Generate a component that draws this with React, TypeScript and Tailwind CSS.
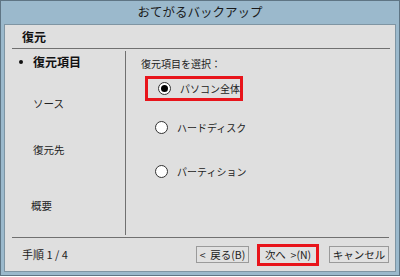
import { useState } from 'react';

const jp = { fontFamily: '"Noto Sans CJK JP", "Noto Sans", sans-serif' };

interface Option {
  id: string;
  label: string;
}

const options: Option[] = [
  { id: 'pc', label: 'パソコン全体' },
  { id: 'disk', label: 'ハードディスク' },
  { id: 'part', label: 'パーティション' },
];

function Radio({ checked }: { checked: boolean }) {
  return (
    <span className="flex h-[13px] w-[13px] shrink-0 items-center justify-center rounded-full border border-[#333] bg-white">
      {checked && <span className="h-[7px] w-[7px] rounded-full bg-black" />}
    </span>
  );
}

export default function App() {
  const [selected, setSelected] = useState('pc');

  return (
    <div className="h-[277px] w-[400px] bg-white text-[10px] text-[#222]" style={jp}>
      <div className="flex h-[276px] w-[400px] flex-col border border-[#5f7584] bg-[#9bb9cc] px-[3px] pb-[3px]">
        {/* title bar */}
        <div className="flex h-[23px] shrink-0 items-center justify-center text-[12.5px] text-[#1a1a1a]">
          おてがるバックアップ
        </div>

        {/* client area */}
        <div className="flex flex-1 flex-col border border-[#7f95a3] bg-[#dfdfdf]">
          <div className="flex h-[23px] shrink-0 items-center pl-[17px] text-[12px] font-bold text-[#111]">
            復元
          </div>
          <div className="ml-[7px] mr-[5px] h-px bg-[#707070]" />

          <div className="flex flex-1">
            {/* steps */}
            <div className="my-[2px] ml-[7px] w-[114px] shrink-0 border-r border-[#707070]">
              <div className="flex items-center pl-[7px] pt-[2px] text-[12px] font-bold text-[#111]">
                <span className="mr-[10px] h-[4px] w-[4px] rounded-full bg-[#111]" />
                <span>復元項目</span>
              </div>
              <div className="pl-[21px] pt-[25px] text-[10.5px]">ソース</div>
              <div className="pl-[21px] pt-[30px] text-[10.5px]">復元先</div>
              <div className="pl-[19px] pt-[40px] text-[10.5px]">概要</div>
            </div>

            {/* options */}
            <div className="flex flex-1 flex-col pl-[15px] pt-[7px]">
              <div>復元項目を選択：</div>
              <div className="ml-[4px] mt-[5px] flex flex-col">
                {options.map((o, i) => (
                  <button
                    key={o.id}
                    onClick={() => setSelected(o.id)}
                    className={`flex h-[25px] w-[98px] items-center gap-[9px] pl-[10px] text-left ${
                      i === 0 ? 'border-[3px] border-[#e8141b] pl-[7px]' : ''
                    } ${i === 1 ? 'mt-[14px]' : ''} ${i === 2 ? 'mt-[19px]' : ''}`}
                  >
                    <Radio checked={selected === o.id} />
                    <span className="whitespace-nowrap">{o.label}</span>
                  </button>
                ))}
              </div>
            </div>
          </div>

          <div className="ml-[7px] mr-[6px] h-px bg-[#707070]" />

          {/* footer */}
          <div className="flex h-[33px] shrink-0 items-center pr-[6px]">
            <div className="pl-[17px] text-[11px]">手順 1 / 4</div>
            <div className="ml-auto flex items-center">
              <button className="flex h-[17px] w-[53px] items-center justify-center border border-[#9a9a9a] bg-[#e1e1e1] text-[10.5px]">
                &lt;&nbsp; 戻る(B)
              </button>
              <div className="ml-[8px] border-[3px] border-[#e8141b]">
                <button className="flex h-[16px] w-[56px] items-center justify-center bg-[#e1e1e1] text-[10.5px]">
                  次へ&nbsp;&nbsp;&gt;(N)
                </button>
              </div>
              <button className="ml-[10px] flex h-[17px] w-[60px] items-center justify-center border border-[#9a9a9a] bg-[#e1e1e1] text-[10.5px]">
                キャンセル
              </button>
            </div>
          </div>
        </div>
      </div>
    </div>
  );
}
